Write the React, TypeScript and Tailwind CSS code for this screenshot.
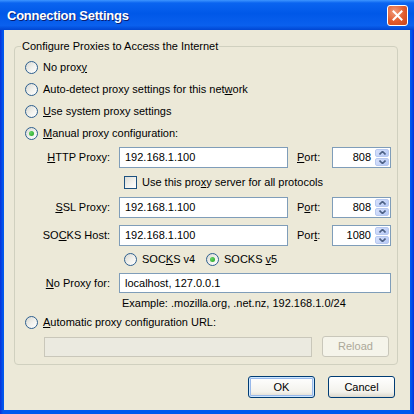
import React from "react";

const U = ({ children }: { children: React.ReactNode }) => <span className="underline">{children}</span>;

function Radio({ checked }: { checked?: boolean }) {
  return (
    <span className="w-[13px] h-[13px] shrink-0 rounded-full border border-[#2d5f8f] bg-[linear-gradient(135deg,#d8d8d1_0%,#f2f2ee_55%,#ffffff_100%)] flex items-center justify-center">
      {checked && <span className="w-[5px] h-[5px] rounded-full bg-[radial-gradient(circle_at_35%_35%,#64d464,#21a121)]" />}
    </span>
  );
}

function Checkbox() {
  return <span className="w-[13px] h-[13px] shrink-0 border border-[#1c5180] bg-[linear-gradient(135deg,#dcdcd7_0%,#f4f4f0_60%,#ffffff_100%)]" />;
}

function TextBox({ value, className }: { value: string; className: string }) {
  return (
    <div className={"h-[21px] border border-[#7f9db9] bg-white flex items-center pl-[5px] " + className}>{value}</div>
  );
}

function Arrow({ up }: { up?: boolean }) {
  return (
    <svg width="7" height="4" viewBox="0 0 7 4">
      <path d={up ? "M0.5 3.5 L3.5 0.5 L6.5 3.5" : "M0.5 0.5 L3.5 3.5 L6.5 0.5"} fill="none" stroke="#4d6185" strokeWidth="1.6" />
    </svg>
  );
}

function PortBox({ value }: { value: string }) {
  return (
    <div className="w-[59px] h-[21px] border border-[#7f9db9] bg-white flex items-stretch">
      <div className="flex-1 flex items-center justify-end pr-[4px]">{value}</div>
      <div className="w-[14px] mr-[1px] flex flex-col gap-[1px] py-[1px]">
        <div className="flex-1 rounded-[2px] bg-[linear-gradient(135deg,#d7e1fb,#b6c9f6)] border border-[#b7c8f0] flex items-center justify-center">
          <Arrow up />
        </div>
        <div className="flex-1 rounded-[2px] bg-[linear-gradient(135deg,#d7e1fb,#b6c9f6)] border border-[#b7c8f0] flex items-center justify-center">
          <Arrow />
        </div>
      </div>
    </div>
  );
}

function ProxyRow({ label, value, port, portLabel }: { label: React.ReactNode; value: string; port: string; portLabel: React.ReactNode }) {
  return (
    <div className="h-[21px] flex items-center">
      <div className="w-[95px] text-right">{label}</div>
      <TextBox value={value} className="ml-[9px] w-[169px]" />
      <div className="ml-[9px] w-[35px]">{portLabel}</div>
      <PortBox value={port} />
    </div>
  );
}

export default function App() {
  return (
    <div className="w-[414px] h-[414px] overflow-hidden bg-[linear-gradient(to_right,#0831d9,#0058ee_3px,#0058ee_411px,#0831d9)] flex flex-col font-['Liberation_Sans',Arial,sans-serif] text-[11px] leading-[13px] text-black">
      {/* title bar */}
      <div className="h-[30px] shrink-0 flex items-center justify-between pl-[7px] pr-[6px] bg-[linear-gradient(to_bottom,#3d95ff_0%,#0a64f0_10%,#0058e8_45%,#0a60ee_85%,#0046d2_100%)]">
        <span className="text-white font-bold text-[13px] tracking-[-0.25px] [text-shadow:1px_1px_0_#0a1e70]">Connection Settings</span>
        <div className="w-[21px] h-[21px] rounded-[3px] border border-white bg-[radial-gradient(circle_at_35%_30%,#f19a7a,#e05a2c_55%,#c8441c)] flex items-center justify-center">
          <svg width="11" height="11" viewBox="0 0 11 11">
            <path d="M1.5 1.5 L9.5 9.5 M9.5 1.5 L1.5 9.5" stroke="#ffffff" strokeWidth="2" strokeLinecap="square" />
          </svg>
        </div>
      </div>

      {/* client area */}
      <div className="flex-1 mx-[4px] mb-[4px] bg-[#ece9d8] flex flex-col">
        <fieldset className="mt-[10px] ml-[10px] mr-[12px] border border-[#d0d0bf] rounded-[4px] pb-[7px]">
          <legend className="ml-[6px] px-[1px] leading-[13px]">Configure Proxies to Access the Internet</legend>
          <div className="pt-[3px]">
            <div className="h-[22px] flex items-center pl-[10px] gap-[5px]">
              <Radio />
              <span>No prox<U>y</U></span>
            </div>
            <div className="h-[22px] flex items-center pl-[10px] gap-[5px]">
              <Radio />
              <span>Auto-detect proxy settings for this net<U>w</U>ork</span>
            </div>
            <div className="h-[22px] flex items-center pl-[10px] gap-[5px]">
              <Radio />
              <span><U>U</U>se system proxy settings</span>
            </div>
            <div className="h-[22px] flex items-center pl-[10px] gap-[5px]">
              <Radio checked />
              <span><U>M</U>anual proxy configuration:</span>
            </div>
          </div>

          <div className="mt-[3px]">
            <ProxyRow label={<><U>H</U>TTP Proxy:</>} value="192.168.1.100" portLabel={<><U>P</U>ort:</>} port="808" />
          </div>
          <div className="h-[29px] flex items-center pl-[109px] gap-[5px]">
            <Checkbox />
            <span>Use this pro<U>x</U>y server for all protocols</span>
          </div>
          <ProxyRow label={<><U>S</U>SL Proxy:</>} value="192.168.1.100" portLabel={<>P<U>o</U>rt:</>} port="808" />
          <div className="mt-[7px]">
            <ProxyRow label={<>SO<U>C</U>KS Host:</>} value="192.168.1.100" portLabel={<>Por<U>t</U>:</>} port="1080" />
          </div>
          <div className="h-[27px] flex items-center pl-[109px]">
            <div className="w-[82px] flex items-center gap-[5px]">
              <Radio />
              <span>SOC<U>K</U>S v4</span>
            </div>
            <div className="flex items-center gap-[5px]">
              <Radio checked />
              <span>SOCKS <U>v</U>5</span>
            </div>
          </div>
          <div className="h-[20px] flex items-center">
            <div className="w-[95px] text-right"><U>N</U>o Proxy for:</div>
            <div className="ml-[9px] w-[272px] h-[20px] border border-[#7f9db9] bg-white flex items-center pl-[5px]">localhost, 127.0.0.1</div>
          </div>
          <div className="h-[20px] flex items-center pl-[107px]">Example: .mozilla.org, .net.nz, 192.168.1.0/24</div>
          <div className="h-[18px] flex items-center pl-[10px] gap-[5px]">
            <Radio />
            <span><U>A</U>utomatic proxy configuration URL:</span>
          </div>
          <div className="mt-[5px] h-[21px] flex items-center pl-[29px]">
            <div className="w-[268px] h-[20px] border border-[#c9c7ba] bg-[#ebeae0]" />
            <div className="ml-[10px] w-[67px] h-[21px] rounded-[3px] border border-[#c9c7ba] bg-[#f5f4ea] flex items-center justify-center text-[#aca899]">Reload</div>
          </div>
        </fieldset>

        <div className="mt-[11px] mr-[15px] flex justify-end gap-[13px]">
          <div className="w-[67px] h-[22px] rounded-[3px] border border-[#003c74] bg-[linear-gradient(to_bottom,#ffffff,#f3f2ec_75%,#dcd8cc)] shadow-[inset_0_0_0_1px_#cee7ff,inset_0_0_0_2px_#98b8ea] flex items-center justify-center">OK</div>
          <div className="w-[67px] h-[22px] rounded-[3px] border border-[#003c74] bg-[linear-gradient(to_bottom,#ffffff,#f3f2ec_75%,#dcd8cc)] flex items-center justify-center">Cancel</div>
        </div>
      </div>
    </div>
  );
}
